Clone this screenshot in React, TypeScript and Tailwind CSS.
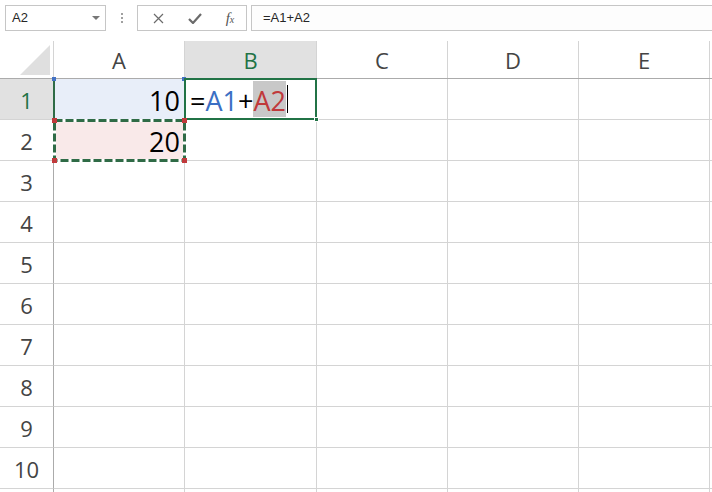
import React from 'react';

const colWidths = [131, 132, 131, 131, 131, 131];
const colNames = ['A', 'B', 'C', 'D', 'E', ''];
const rows = [1, 2, 3, 4, 5, 6, 7, 8, 9, 10, 11];

function Toolbar() {
    return (
        <div className="h-[41px] flex items-start pt-[5px] pl-[5px] text-[#262626]">
            {/* name box */}
            <div className="w-[101px] h-[26px] border border-[#c6c6c6] bg-white flex items-center justify-between pl-[6px] pr-[5px] text-[13px] font-['Liberation_Sans',sans-serif]">
                <span>A2</span>
                <svg width="8" height="5" viewBox="0 0 8 5"><path d="M0 0h8L4 4z" fill="#777" /></svg>
            </div>
            {/* dots */}
            <div className="w-[31px] h-[26px] flex flex-col items-center justify-center gap-[2px]">
                <span className="w-[2px] h-[2px] bg-[#a0a0a0]" />
                <span className="w-[2px] h-[2px] bg-[#a0a0a0]" />
                <span className="w-[2px] h-[2px] bg-[#a0a0a0]" />
            </div>
            {/* buttons */}
            <div className="w-[110px] h-[26px] border border-[#c6c6c6] bg-white flex items-center">
                <div className="w-[38px] flex justify-center pl-[2px]">
                    <svg width="11" height="11" viewBox="0 0 11 11"><path d="M1 1l9 9M10 1l-9 9" stroke="#6b6b6b" strokeWidth="1.2" /></svg>
                </div>
                <div className="w-[38px] flex justify-center">
                    <svg width="14" height="11" viewBox="0 0 14 11"><path d="M1 6l4 4 8-9" stroke="#6b6b6b" strokeWidth="2.2" fill="none" /></svg>
                </div>
                <div className="w-[32px] flex justify-center text-[15px] italic text-[#555] font-['Liberation_Serif',serif] leading-none">
                    <span>f<span className="text-[10px]">x</span></span>
                </div>
            </div>
            {/* formula */}
            <div className="ml-[4px] flex-1 h-[26px] border border-[#c6c6c6] border-r-0 bg-[#fdfdfd] flex items-center pl-[11px] text-[13px] font-['Liberation_Sans',sans-serif]">
                =A1+A2
            </div>
        </div>
    );
}

function HeaderRow() {
    return (
        <div className="flex h-[38px] border-b border-[#ababab]">
            <div className="w-[54px] shrink-0 border-r border-[#d4d4d4] relative">
                <svg className="absolute right-[3px] bottom-[3px]" width="30" height="30" viewBox="0 0 30 30">
                    <path d="M30 0V30H0z" fill="#dfdfdf" />
                </svg>
            </div>
            {colWidths.map((w, i) => (
                <div
                    key={i}
                    style={{ width: w }}
                    className={`shrink-0 border-r border-[#d4d4d4] flex items-center justify-center text-[22px] pt-[2px] ${i === 1 ? 'bg-[#e1e1e1] text-[#217346]' : 'text-[#444]'}`}
                >
                    {colNames[i]}
                </div>
            ))}
        </div>
    );
}

function Cell({ row, col, w }: { row: number; col: number; w: number }) {
    if (row === 1 && col === 0) {
        return (
            <div style={{ width: w }} className="shrink-0 border-r border-b border-[#d4d4d4] bg-[#e8eef9] relative flex items-center justify-end pr-[4px] pt-[4px] text-[27px] text-black">
                <div className="absolute left-[-1px] top-[-1px] bottom-0 w-[2px] bg-[#2f6b46]" />
                <div className="absolute left-[-2px] top-[-2px] w-[4px] h-[4px] bg-[#4472c4]" />
                <div className="absolute right-[-2px] top-[-2px] w-[4px] h-[4px] bg-[#4472c4]" />
                10
            </div>
        );
    }
    if (row === 2 && col === 0) {
        return (
            <div style={{ width: w }} className="shrink-0 border-r border-b border-[#d4d4d4] bg-[#f9e9e9] relative flex items-center justify-end pr-[4px] pt-[4px] text-[27px] text-black">
                <svg className="absolute left-[-1px] top-[-1px]" width={w + 2} height="43" viewBox={`0 0 ${w + 2} 43`}>
                    <rect x="1.5" y="1.5" width={w - 1} height="40" fill="none" stroke="#fff" strokeWidth="3" />
                    <rect x="1.5" y="1.5" width={w - 1} height="40" fill="none" stroke="#2f6b46" strokeWidth="3" strokeDasharray="8 3" />
                </svg>
                <div className="absolute left-[-2px] top-[-2px] w-[5px] h-[5px] bg-[#c0393b]" />
                <div className="absolute right-[-3px] top-[-2px] w-[5px] h-[5px] bg-[#c0393b]" />
                <div className="absolute left-[-2px] bottom-[-3px] w-[5px] h-[5px] bg-[#c0393b]" />
                <div className="absolute right-[-3px] bottom-[-3px] w-[5px] h-[5px] bg-[#c0393b]" />
                <span className="relative">20</span>
            </div>
        );
    }
    if (row === 1 && col === 1) {
        return (
            <div style={{ width: w }} className="shrink-0 border-r border-b border-[#d4d4d4] relative">
                <div className="absolute left-[-1px] top-[-1px] right-[-1px] bottom-[-1px] border-2 border-[#217346] flex items-stretch pl-[4px] text-[27px] text-black">
                    <div className="flex items-center pt-[4px]">
                        <span>=</span>
                        <span className="text-[#3b6fc4]">A1</span>
                        <span>+</span>
                    </div>
                    <div className="bg-[#c8c8c8] text-[#c0393b] flex items-center pt-[4px] my-[1px]">A2</div>
                    <div className="w-[1px] bg-black my-[5px] ml-[1px]" />
                </div>
                <div className="absolute right-[-3px] bottom-[-3px] w-[5px] h-[5px] bg-[#217346] border border-white" />
            </div>
        );
    }
    return <div style={{ width: w }} className="shrink-0 border-r border-b border-[#d4d4d4]" />;
}

export default function App() {
    return (
        <div className="w-[712px] h-[492px] bg-white overflow-hidden font-['Open_Sans',sans-serif]">
            <Toolbar />
            <HeaderRow />
            {rows.map(r => (
                <div key={r} className="flex h-[41px]">
                    <div className={`w-[54px] shrink-0 border-r border-r-[#ababab] border-b border-b-[#d4d4d4] flex items-center justify-center text-[22px] pt-[2px] ${r === 1 ? 'bg-[#e1e1e1] text-[#217346]' : 'text-[#444]'}`}>
                        {r === 11 ? '' : r}
                    </div>
                    {colWidths.map((w, i) => (
                        <Cell key={i} row={r} col={i} w={w} />
                    ))}
                </div>
            ))}
        </div>
    );
}
